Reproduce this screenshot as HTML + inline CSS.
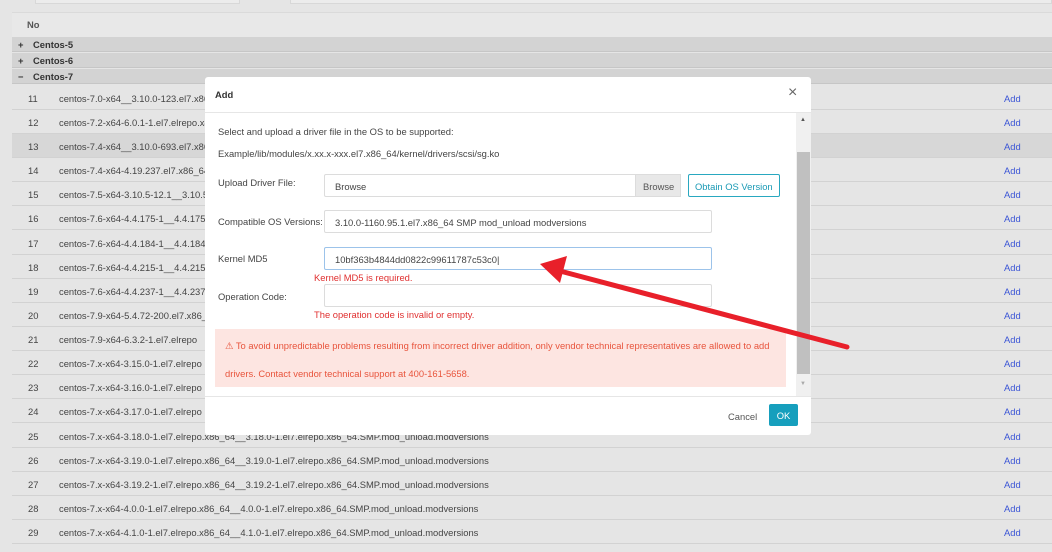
<!DOCTYPE html><html><head><style>
*{margin:0;padding:0;box-sizing:border-box}
body{width:1052px;height:552px;overflow:hidden;background:#e5e5e5;font-family:"Liberation Sans",sans-serif;font-size:9.4px;color:#444;position:relative}
.a{position:absolute}
.row{position:absolute;left:12px;width:1040px;height:24px;border-bottom:1px solid #d2d2d2;background:#e5e5e5}
.row .n{position:absolute;left:16px;top:7px}
.row .t{position:absolute;left:47px;top:7px;white-space:nowrap}
.row .l{position:absolute;left:992px;top:7px;color:#3b55d6}
.grp{position:absolute;left:12px;width:1040px;height:15px;background:#d3d3d3;border-bottom:1px solid #c6c6c6;font-weight:bold;color:#333}
.grp span{position:absolute;top:2px}
.modal{position:absolute;left:205px;top:77px;width:606px;height:358px;background:#fff;border-radius:3px}
.inp{position:absolute;height:23px;border:1px solid #dcdcdc;border-radius:2px;padding:6px 0 0 10px;color:#444}
.lab{position:absolute;left:13px;color:#444}
.err{position:absolute;left:109px;color:#e03030}
</style></head><body>
<div class="a" style="left:35px;top:0;width:205px;height:4px;border:1px solid #d8d8d8;border-top:0;background:#ececec"></div>
<div class="a" style="left:290px;top:0;width:762px;height:4px;border:1px solid #d8d8d8;border-top:0;background:#ececec"></div>
<div class="a" style="left:12px;top:12px;width:1040px;height:25px;background:#e8e8e8;border-top:1px solid #dadada"></div>
<div class="a" style="left:27px;top:19px;font-weight:bold;color:#555">No</div>
<div class="grp" style="top:37px"><span style="left:6px">+</span><span style="left:21px">Centos-5</span></div>
<div class="grp" style="top:53px"><span style="left:6px">+</span><span style="left:21px">Centos-6</span></div>
<div class="grp" style="top:69px"><span style="left:6px">−</span><span style="left:21px">Centos-7</span></div>
<div class="row" style="top:86px"><span class="n">11</span><span class="t">centos-7.0-x64__3.10.0-123.el7.x86_64</span><span class="l">Add</span></div>
<div class="row" style="top:110px"><span class="n">12</span><span class="t">centos-7.2-x64-6.0.1-1.el7.elrepo.x86_64</span><span class="l">Add</span></div>
<div class="row" style="top:134px;background:#d7d7d7"><span class="n">13</span><span class="t">centos-7.4-x64__3.10.0-693.el7.x86_64</span><span class="l">Add</span></div>
<div class="row" style="top:158px"><span class="n">14</span><span class="t">centos-7.4-x64-4.19.237.el7.x86_64</span><span class="l">Add</span></div>
<div class="row" style="top:182px"><span class="n">15</span><span class="t">centos-7.5-x64-3.10.5-12.1__3.10.5</span><span class="l">Add</span></div>
<div class="row" style="top:206px"><span class="n">16</span><span class="t">centos-7.6-x64-4.4.175-1__4.4.175</span><span class="l">Add</span></div>
<div class="row" style="top:231px"><span class="n">17</span><span class="t">centos-7.6-x64-4.4.184-1__4.4.184</span><span class="l">Add</span></div>
<div class="row" style="top:255px"><span class="n">18</span><span class="t">centos-7.6-x64-4.4.215-1__4.4.215</span><span class="l">Add</span></div>
<div class="row" style="top:279px"><span class="n">19</span><span class="t">centos-7.6-x64-4.4.237-1__4.4.237</span><span class="l">Add</span></div>
<div class="row" style="top:303px"><span class="n">20</span><span class="t">centos-7.9-x64-5.4.72-200.el7.x86_64</span><span class="l">Add</span></div>
<div class="row" style="top:327px"><span class="n">21</span><span class="t">centos-7.9-x64-6.3.2-1.el7.elrepo</span><span class="l">Add</span></div>
<div class="row" style="top:351px"><span class="n">22</span><span class="t">centos-7.x-x64-3.15.0-1.el7.elrepo</span><span class="l">Add</span></div>
<div class="row" style="top:375px"><span class="n">23</span><span class="t">centos-7.x-x64-3.16.0-1.el7.elrepo</span><span class="l">Add</span></div>
<div class="row" style="top:399px"><span class="n">24</span><span class="t">centos-7.x-x64-3.17.0-1.el7.elrepo</span><span class="l">Add</span></div>
<div class="row" style="top:424px"><span class="n">25</span><span class="t">centos-7.x-x64-3.18.0-1.el7.elrepo.x86_64__3.18.0-1.el7.elrepo.x86_64.SMP.mod_unload.modversions</span><span class="l">Add</span></div>
<div class="row" style="top:448px"><span class="n">26</span><span class="t">centos-7.x-x64-3.19.0-1.el7.elrepo.x86_64__3.19.0-1.el7.elrepo.x86_64.SMP.mod_unload.modversions</span><span class="l">Add</span></div>
<div class="row" style="top:472px"><span class="n">27</span><span class="t">centos-7.x-x64-3.19.2-1.el7.elrepo.x86_64__3.19.2-1.el7.elrepo.x86_64.SMP.mod_unload.modversions</span><span class="l">Add</span></div>
<div class="row" style="top:496px"><span class="n">28</span><span class="t">centos-7.x-x64-4.0.0-1.el7.elrepo.x86_64__4.0.0-1.el7.elrepo.x86_64.SMP.mod_unload.modversions</span><span class="l">Add</span></div>
<div class="row" style="top:520px"><span class="n">29</span><span class="t">centos-7.x-x64-4.1.0-1.el7.elrepo.x86_64__4.1.0-1.el7.elrepo.x86_64.SMP.mod_unload.modversions</span><span class="l">Add</span></div>

<div class="modal">
 <div class="a" style="left:10px;top:12px;font-weight:bold;color:#333">Add</div>
 <div class="a" style="left:583px;top:7px;font-size:16px;color:#666">×</div>
 <div class="a" style="left:0;top:35px;width:606px;border-top:1px solid #e6e6e6"></div>
 <div class="a" style="left:591px;top:36px;width:15px;height:283px;background:#f0f0f0"></div>
 <div class="a" style="left:592px;top:75px;width:13px;height:222px;background:#c0c0c0"></div>
 <div class="a" style="left:595px;top:40px;font-size:6px;color:#555">▲</div>
 <div class="a" style="left:595px;top:304px;font-size:6px;color:#aaa">▼</div>
 <div class="lab" style="top:49px">Select and upload a driver file in the OS to be supported:</div>
 <div class="lab" style="top:71px">Example/lib/modules/x.xx.x-xxx.el7.x86_64/kernel/drivers/scsi/sg.ko</div>
 <div class="lab" style="top:100px">Upload Driver File:</div>
 <div class="inp" style="left:119px;top:97px;width:357px">Browse</div>
 <div class="a" style="left:430px;top:97px;width:46px;height:23px;background:#e8e8e8;border:1px solid #dcdcdc;padding:6px 0 0 7px;color:#555">Browse</div>
 <div class="a" style="left:483px;top:97px;width:92px;height:23px;border:1px solid #29a8c0;border-radius:2px;padding:6px 0 0 6px;color:#1a9ab5">Obtain OS Version</div>
 <div class="lab" style="top:139px">Compatible OS Versions:</div>
 <div class="inp" style="left:119px;top:133px;width:388px">3.10.0-1160.95.1.el7.x86_64 SMP mod_unload modversions</div>
 <div class="lab" style="top:176px">Kernel MD5</div>
 <div class="inp" style="left:119px;top:170px;width:388px;border-color:#9cc3ea">10bf363b4844dd0822c99611787c53c0|</div>
 <div class="err" style="top:195px">Kernel MD5 is required.</div>
 <div class="lab" style="top:214px">Operation Code:</div>
 <div class="inp" style="left:119px;top:207px;width:388px"></div>
 <div class="err" style="top:232px">The operation code is invalid or empty.</div>
 <div class="a" style="left:10px;top:252px;width:571px;height:58px;background:#fde5e1;color:#e8543c;padding:3px 8px 0 10px;line-height:28px;font-size:9.4px">⚠ To avoid unpredictable problems resulting from incorrect driver addition, only vendor technical representatives are allowed to add drivers. Contact vendor technical support at 400-161-5658.</div>
 <div class="a" style="left:0;top:319px;width:606px;border-top:1px solid #e6e6e6"></div>
 <div class="a" style="left:523px;top:334px;color:#555">Cancel</div>
 <div class="a" style="left:564px;top:327px;width:29px;height:22px;background:#169fbd;border-radius:2px;color:#fff;text-align:center;padding-top:6px">OK</div>
</div>
<svg class="a" style="left:0;top:0" width="1052" height="552"><line x1="847" y1="347" x2="560" y2="271" stroke="#e8202a" stroke-width="5" stroke-linecap="round"/><polygon points="540,264 567,256 560,283" fill="#e8202a"/></svg>
</body></html>
